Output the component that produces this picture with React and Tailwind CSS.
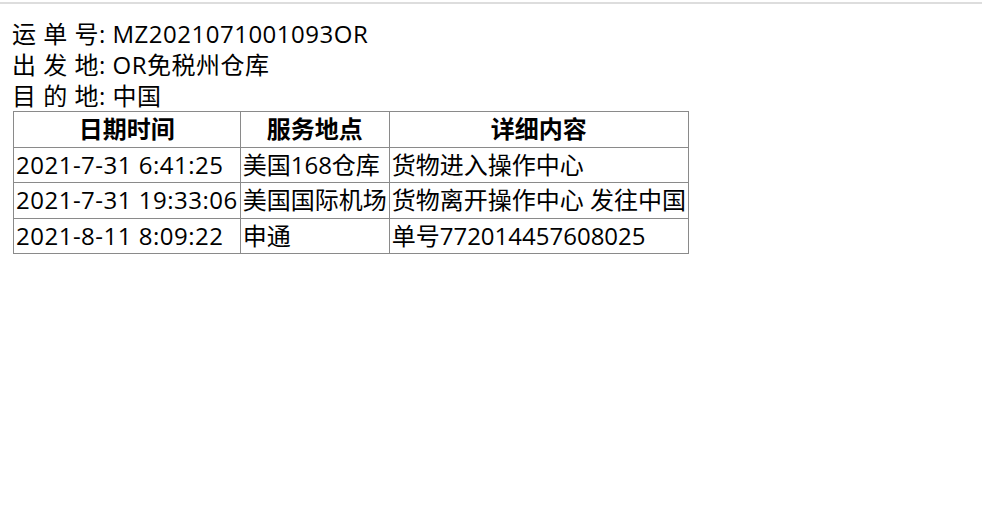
const rows = [
  ['2021-7-31 6:41:25', '美国168仓库', '货物进入操作中心'],
  ['2021-7-31 19:33:06', '美国国际机场', '货物离开操作中心 发往中国'],
  ['2021-8-11 8:09:22', '申通', '单号772014457608025'],
];

const cell = 'border border-[#8a8a8a] px-[2px] whitespace-nowrap';

export default function App() {
  return (
    <div className="min-h-[520px] bg-white text-black font-['Open_Sans','Noto_Sans_CJK_SC',sans-serif]">
      <div className="pt-[2px]">
        <div className="h-[2px] bg-[#dddddd]"></div>
      </div>
      <div className="px-3 pt-[14px] text-[24px] leading-[31px]">
        <div className="tracking-[0.5px]">
          <div>运 单 号: MZ2021071001093OR</div>
          <div>出 发 地: OR免税州仓库</div>
          <div>目 的 地: 中国</div>
        </div>
        <table className="ml-px border-collapse border border-[#8a8a8a] leading-[34.5px]">
          <thead>
            <tr>
              <th className={`${cell} font-bold`}>日期时间</th>
              <th className={`${cell} font-bold`}>服务地点</th>
              <th className={`${cell} font-bold`}>详细内容</th>
            </tr>
          </thead>
          <tbody>
            {rows.map((r) => (
              <tr key={r[0]}>
                <td className={`${cell} tracking-[0.5px]`}>{r[0]}</td>
                <td className={cell}>{r[1]}</td>
                <td className={cell}>{r[2]}</td>
              </tr>
            ))}
          </tbody>
        </table>
      </div>
    </div>
  );
}
